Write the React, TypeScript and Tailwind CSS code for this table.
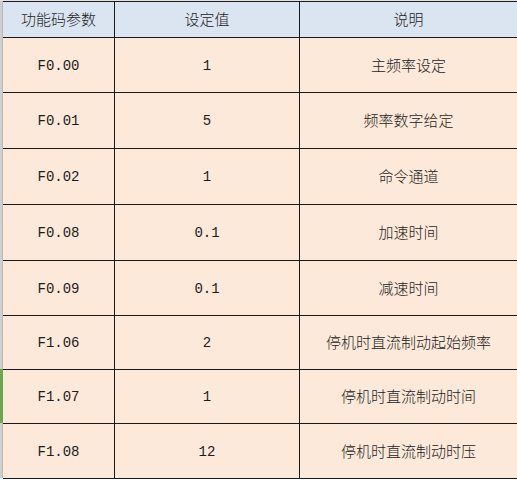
import React from 'react';

const rows = [
  { code: 'F0.00', value: '1', desc: '主频率设定', h: 'h-[55px]' },
  { code: 'F0.01', value: '5', desc: '频率数字给定', h: 'h-[56px]' },
  { code: 'F0.02', value: '1', desc: '命令通道', h: 'h-[56px]' },
  { code: 'F0.08', value: '0.1', desc: '加速时间', h: 'h-[56px]' },
  { code: 'F0.09', value: '0.1', desc: '减速时间', h: 'h-[55px]' },
  { code: 'F1.06', value: '2', desc: '停机时直流制动起始频率', h: 'h-[54px]' },
  { code: 'F1.07', value: '1', desc: '停机时直流制动时间', h: 'h-[54px]', mark: true },
  { code: 'F1.08', value: '12', desc: '停机时直流制动时压', h: 'h-[55px]' },
];

const cjk = "font-['Noto_Sans_CJK_SC',sans-serif] font-light";
const mono = "font-['Liberation_Mono','Noto_Sans_CJK_SC',monospace]";

export default function App() {
  return (
    <div className="w-[517px] h-[480px] overflow-hidden bg-white text-[#1c1c1c]">
      <div className="h-px bg-[#e4e4e4]" />
      <div className="flex">
        {/* row header strip */}
        <div className="w-[3px] flex flex-col">
          <div className="h-[36px] bg-[#cfcfcf] border-r border-[#b9b9b9]" />
          {rows.map((r) => (
            <div
              key={r.code}
              className={`${r.h} ${r.mark ? 'bg-[#6aa84f]' : 'bg-[#cfcfcf] border-r border-[#b9b9b9]'}`}
            />
          ))}
        </div>
        <div className="flex-1 border-t border-[#1a1a1a]">
          <div className={`flex h-[36px] bg-[#dbe5f1] border-b border-[#1a1a1a] text-[15px] ${cjk}`}>
            <div className="w-[112px] border-r border-[#1a1a1a] flex items-center justify-center">功能码参数</div>
            <div className="w-[185px] border-r border-[#1a1a1a] flex items-center justify-center">设定值</div>
            <div className="flex-1 flex items-center justify-center">说明</div>
          </div>
          {rows.map((r) => (
            <div key={r.code} className={`flex ${r.h} bg-[#fde9d9] border-b border-[#1a1a1a]`}>
              <div className={`w-[112px] border-r border-[#1a1a1a] flex items-center justify-center pt-[2px] text-[14px] ${mono}`}>
                {r.code}
              </div>
              <div className={`w-[185px] border-r border-[#1a1a1a] flex items-center justify-center pt-[2px] text-[14px] ${mono}`}>
                {r.value}
              </div>
              <div className={`flex-1 flex items-center justify-center text-[15px] ${cjk}`}>{r.desc}</div>
            </div>
          ))}
        </div>
      </div>
    </div>
  );
}
